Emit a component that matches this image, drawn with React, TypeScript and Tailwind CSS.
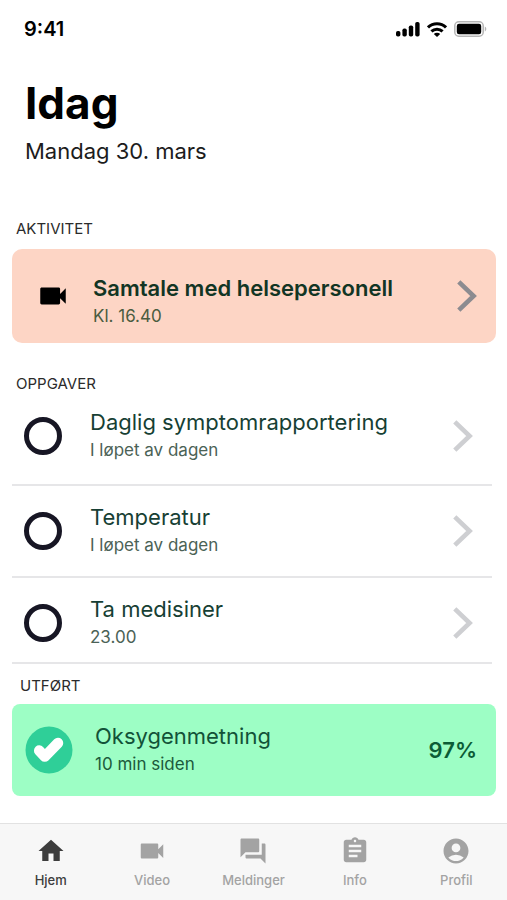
import { useState } from 'react';
import type { IconType } from 'react-icons';
import { MdAccountCircle, MdAssignment, MdForum, MdHome, MdVideocam } from 'react-icons/md';

type Task = {
  id: string;
  title: string;
  due: string;
  rowClass: string;
};

type Tab = {
  label: string;
  icon: IconType;
};

const tasks: Task[] = [
  { id: 'symptom', title: 'Daglig symptomrapportering', due: 'I løpet av dagen', rowClass: 'pt-3.5 pb-5' },
  { id: 'temperatur', title: 'Temperatur', due: 'I løpet av dagen', rowClass: 'pt-[17px] pb-[17px]' },
  { id: 'medisiner', title: 'Ta medisiner', due: '23.00', rowClass: 'pt-[17px] pb-[11px]' },
];

const tabs: Tab[] = [
  { label: 'Hjem', icon: MdHome },
  { label: 'Video', icon: MdVideocam },
  { label: 'Meldinger', icon: MdForum },
  { label: 'Info', icon: MdAssignment },
  { label: 'Profil', icon: MdAccountCircle },
];

function Chevron({ className }: { className: string }) {
  return (
    <svg viewBox="0 0 20 32" className={`w-5 h-8 shrink-0 ${className}`} fill="none" stroke="currentColor" strokeWidth="4.6" aria-hidden="true">
      <path d="M1.8 1.8 16.6 16 1.8 30.2" />
    </svg>
  );
}

function StatusBar() {
  return (
    <div className="flex items-center justify-between pt-[15px] pl-6 pr-5">
      <span className="text-xl leading-7 font-semibold">9:41</span>
      <div className="flex items-center gap-[7px]">
        <svg viewBox="0 0 24 16" className="w-6 h-4" aria-hidden="true">
          <rect x="0" y="10" width="4.4" height="5.6" rx="1.8" />
          <rect x="6.4" y="7.4" width="4.4" height="8.2" rx="1.8" />
          <rect x="12.8" y="4.4" width="4.4" height="11.2" rx="1.8" />
          <rect x="19.2" y="1" width="4.4" height="14.6" rx="1.8" />
        </svg>
        <svg viewBox="0 0 20 15" className="w-5 h-[15px]" fill="none" stroke="black" strokeWidth="3" aria-hidden="true">
          <path d="M1 5.4C6 .5 14 .5 19 5.4" />
          <path d="M4.4 9.4c3.2-3 8-3 11.2 0" />
          <path d="M10 15 6.8 12c1.7-1.6 4.7-1.6 6.4 0z" fill="black" stroke="none" />
        </svg>
        <svg viewBox="0 0 33 16" className="w-[33px] h-4" aria-hidden="true">
          <rect x="0.8" y="0.8" width="28.4" height="14.4" rx="4" fill="none" stroke="#b5b5b5" strokeWidth="1.5" />
          <rect x="2.8" y="2.8" width="24.4" height="10.4" rx="2.2" />
          <path d="M30.8 5.6c2 .7 2 4.1 0 4.8z" fill="#b5b5b5" />
        </svg>
      </div>
    </div>
  );
}

function TaskRow({ task, done, onToggle }: { task: Task; done: boolean; onToggle: () => void }) {
  return (
    <li className={`flex items-center border-b-2 border-[#e6e6e8] pl-3 pr-[19px] ${task.rowClass}`}>
      <input
        id={task.id}
        type="checkbox"
        checked={done}
        onChange={onToggle}
        className="size-[38px] shrink-0 appearance-none rounded-full border-5 border-[#171624] checked:bg-[#2fcb94]"
      />
      <label htmlFor={task.id} className="ml-7 flex-1">
        <span className="block text-[22px] leading-7 text-[#173f34]">{task.title}</span>
        <span className="block text-[17px] leading-7 text-[#4b6256]">{task.due}</span>
      </label>
      <a href={`#${task.id}`} aria-label={task.title}>
        <Chevron className="text-[#cecfd2]" />
      </a>
    </li>
  );
}

export default function App() {
  const [done, setDone] = useState<string[]>([]);
  const [activeTab, setActiveTab] = useState('Hjem');

  const toggle = (id: string) => {
    setDone((prev) => (prev.includes(id) ? prev.filter((d) => d !== id) : [...prev, id]));
  };

  return (
    <div className="flex min-h-screen flex-col bg-white font-['Inter',sans-serif] text-black">
      <StatusBar />

      <header className="px-[25px] pt-8">
        <h1 className="text-[44px] leading-14 font-bold">Idag</h1>
        <p className="mt-1.5 text-[22px] leading-7 text-[#1c1c1c]">Mandag 30. mars</p>
      </header>

      <main className="flex-1 pl-3 pr-[11px] pt-[54px] pb-6">
        <section>
          <h2 className="pl-1 text-[15px] leading-5 text-[#2b2b2b]">AKTIVITET</h2>
          <a href="#samtale" className="mt-2.5 flex items-center rounded-[10px] bg-[#fdd5c5] py-[13px] pl-6 pr-[19px]">
            <MdVideocam className="size-[34px] shrink-0" />
            <span className="ml-[23px] flex-1 pt-3">
              <span className="block text-[22px] leading-7 font-semibold text-[#123524]">Samtale med helsepersonell</span>
              <span className="block text-[17px] leading-7 text-[#4a5c40]">Kl. 16.40</span>
            </span>
            <Chevron className="text-[#8c8b90]" />
          </a>
        </section>

        <section className="mt-[31px]">
          <h2 className="pl-1 text-[15px] leading-5 text-[#2b2b2b]">OPPGAVER</h2>
          <ul className="mr-1">
            {tasks.map((task) => (
              <TaskRow key={task.id} task={task} done={done.includes(task.id)} onToggle={() => toggle(task.id)} />
            ))}
          </ul>
        </section>

        <section className="mt-3">
          <h2 className="pl-2 text-[15px] leading-5 text-[#2b2b2b]">UTFØRT</h2>
          <div className="mt-2 flex items-center rounded-lg bg-[#9dfec5] py-[18px] pl-[13px] pr-[19px]">
            <svg viewBox="0 0 48 48" className="size-12 shrink-0" aria-hidden="true">
              <circle cx="24" cy="24" r="23.5" fill="#2fcf98" />
              <path d="M14.2 24.6l5.6 6L33 17" fill="none" stroke="white" strokeWidth="10.5" strokeLinecap="round" strokeLinejoin="round" />
            </svg>
            <div className="ml-[22px] flex-1">
              <p className="text-[22px] leading-7 text-[#125238]">Oksygenmetning</p>
              <p className="text-[17px] leading-7 text-[#1c5a3c]">10 min siden</p>
            </div>
            <span className="text-[22px] leading-7 font-semibold text-[#0b5c35]">97%</span>
          </div>
        </section>
      </main>

      <nav className="grid grid-cols-5 border-t border-[#e2e2e2] bg-[#f7f7f7] pt-3 pb-2.5">
        {tabs.map(({ label, icon: Icon }) => (
          <button
            key={label}
            type="button"
            onClick={() => setActiveTab(label)}
            className={`flex flex-col items-center gap-1 text-[13px] leading-5 font-medium ${activeTab === label ? 'text-[#3d3d3d]' : 'text-[#a3a3a3]'}`}
          >
            <Icon className="size-[30px]" />
            {label}
          </button>
        ))}
      </nav>
    </div>
  );
}
